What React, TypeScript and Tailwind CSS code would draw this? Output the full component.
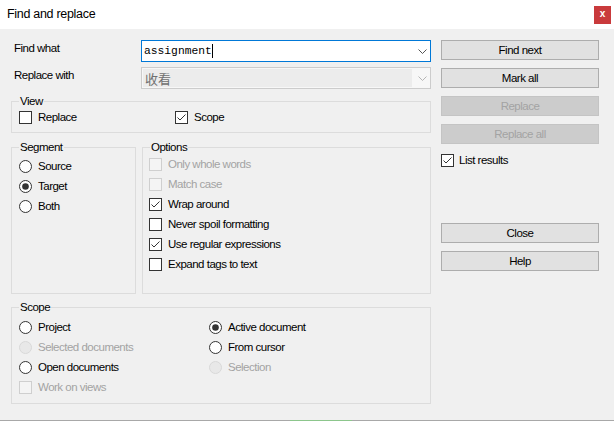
import React from "react";

function Check({ checked = false, disabled = false }: { checked?: boolean; disabled?: boolean }) {
  return (
    <span
      className={`flex h-[13px] w-[13px] shrink-0 items-center justify-center border ${
        disabled ? "border-[#cfcfcf] bg-[#f4f4f4]" : "border-[#333333] bg-white"
      }`}
    >
      {checked && (
        <svg width="11" height="11" viewBox="0 0 11 11">
          <path d="M1.5 5.5 L4 8 L9.5 2.5" fill="none" stroke="#333" strokeWidth="1" />
        </svg>
      )}
    </span>
  );
}

function Radio({ checked = false, disabled = false }: { checked?: boolean; disabled?: boolean }) {
  return (
    <svg width="13" height="13" viewBox="0 0 13 13" className="shrink-0">
      <circle
        cx="6.5"
        cy="6.5"
        r="6"
        fill={disabled ? "#e8e8e8" : "#ffffff"}
        stroke={disabled ? "#d8d8d8" : "#333333"}
        strokeWidth="1"
      />
      {checked && <circle cx="6.5" cy="6.5" r="3.3" fill="#333333" />}
    </svg>
  );
}

function Item({
  kind,
  label,
  checked = false,
  disabled = false,
  gap = "gap-[6px]",
}: {
  kind: "check" | "radio";
  label: string;
  checked?: boolean;
  disabled?: boolean;
  gap?: string;
}) {
  return (
    <div className={`flex h-[20px] items-center ${gap}`}>
      {kind === "check" ? <Check checked={checked} disabled={disabled} /> : <Radio checked={checked} disabled={disabled} />}
      <span className={`pt-[1px] ${disabled ? "text-[#a3a3a3]" : "text-black"}`}>{label}</span>
    </div>
  );
}

function Group({ title, className, children }: { title: string; className: string; children?: React.ReactNode }) {
  return (
    <div className={`relative border border-[#dcdcdc] ${className}`}>
      <span className="absolute left-[7px] top-[-8px] bg-[#f0f0f0] px-[1px] leading-[15px]">{title}</span>
      {children}
    </div>
  );
}

function Btn({ label, disabled = false }: { label: string; disabled?: boolean }) {
  return (
    <div
      className={`flex h-[20px] w-full items-center justify-center border pt-[1px] ${
        disabled ? "border-[#c4c4c4] bg-[#cccccc] text-[#a3a3a3]" : "border-[#adadad] bg-[#e1e1e1] text-black"
      }`}
    >
      {label}
    </div>
  );
}

function Chevron({ color }: { color: string }) {
  return (
    <svg width="9" height="5" viewBox="0 0 9 5" className="shrink-0">
      <path d="M0.5 0.5 L4.5 4.5 L8.5 0.5" fill="none" stroke={color} strokeWidth="1" />
    </svg>
  );
}

export default function App() {
  return (
    <div className="flex h-[421px] w-[614px] flex-col overflow-hidden bg-[#f0f0f0] font-['Liberation_Sans',Arial,sans-serif] text-[11.5px] leading-[15px] tracking-[-0.5px] text-black">
      {/* title bar */}
      <div className="flex h-[29px] shrink-0 items-center justify-between bg-white pl-[7px]">
        <span className="text-[12.5px] tracking-[-0.3px]">Find and replace</span>
        <div className="mr-[3px] flex h-[18px] w-[17px] items-center justify-center bg-[#c93a3c] pb-[2px] text-[10px] font-bold tracking-normal text-white">
          x
        </div>
      </div>

      {/* body */}
      <div className="flex flex-1 pt-[11px]">
        {/* left column */}
        <div className="ml-[11px] flex w-[420px] flex-col">
          <div className="flex h-[22px] items-start">
            <span className="ml-[3px] w-[127px] pt-[1px]">Find what</span>
            <div className="flex h-[22px] w-[290px] items-center justify-between border border-[#0078d7] bg-white pl-[2px] pr-[3px]">
              <div className="flex items-center">
                <span className="font-['Liberation_Mono',monospace] text-[11.3px] tracking-normal">assignment</span>
                <span className="h-[14px] w-[1px] bg-black" />
              </div>
              <Chevron color="#555555" />
            </div>
          </div>
          <div className="mt-[5px] flex h-[22px] items-start">
            <span className="ml-[3px] w-[127px] pt-[1px]">Replace with</span>
            <div className="flex h-[22px] w-[290px] items-center justify-between border border-[#cccccc] bg-[#f7f7f7] p-[1px] pr-[3px]">
              <div className="flex h-full w-[269px] items-center bg-[#ececec] pl-[2px]">
                <span className="font-['Noto_Sans_CJK_SC',sans-serif] text-[13px] leading-none tracking-normal text-[#707070]">
                  收看
                </span>
              </div>
              <Chevron color="#b5b5b5" />
            </div>
          </div>

          {/* View */}
          <Group title="View" className="mt-[12px] flex h-[32px] items-center pl-[7px]">
            <div className="w-[156px]">
              <Item kind="check" label="Replace" />
            </div>
            <Item kind="check" label="Scope" checked />
          </Group>

          {/* Segment / Options */}
          <div className="mt-[14px] flex h-[147px] gap-[6px]">
            <Group title="Segment" className="w-[125px] pl-[7px] pt-[8px]">
              <Item kind="radio" label="Source" />
              <Item kind="radio" label="Target" checked />
              <Item kind="radio" label="Both" />
            </Group>
            <Group title="Options" className="w-[289px] pl-[6px] pt-[6px]">
              <Item kind="check" label="Only whole words" disabled />
              <Item kind="check" label="Match case" disabled />
              <Item kind="check" label="Wrap around" checked />
              <Item kind="check" label="Never spoil formatting" />
              <Item kind="check" label="Use regular expressions" checked />
              <Item kind="check" label="Expand tags to text" />
            </Group>
          </div>

          {/* Scope */}
          <Group title="Scope" className="mt-[13px] flex h-[97px] pl-[7px] pt-[9px]">
            <div className="flex w-[190px] flex-col">
              <Item kind="radio" label="Project" />
              <Item kind="radio" label="Selected documents" disabled />
              <Item kind="radio" label="Open documents" />
              <Item kind="check" label="Work on views" disabled />
            </div>
            <div className="flex flex-col">
              <Item kind="radio" label="Active document" checked />
              <Item kind="radio" label="From cursor" />
              <Item kind="radio" label="Selection" disabled />
            </div>
          </Group>
        </div>

        {/* right column */}
        <div className="ml-[10px] flex w-[158px] flex-col">
          <Btn label="Find next" />
          <div className="mt-[8px]">
            <Btn label="Mark all" />
          </div>
          <div className="mt-[8px]">
            <Btn label="Replace" disabled />
          </div>
          <div className="mt-[8px]">
            <Btn label="Replace all" disabled />
          </div>
          <div className="mt-[6px]">
            <Item kind="check" label="List results" checked gap="gap-[5px]" />
          </div>
          <div className="mt-[53px]">
            <Btn label="Close" />
          </div>
          <div className="mt-[8px]">
            <Btn label="Help" />
          </div>
        </div>
      </div>

      {/* bottom edge */}
      <div className="flex h-[1px] shrink-0">
        <div className="w-[290px] bg-[#a8a8a8]" />
        <div className="w-[62px] bg-[#8cc68c]" />
        <div className="flex-1 bg-[#a8a8a8]" />
      </div>
    </div>
  );
}
